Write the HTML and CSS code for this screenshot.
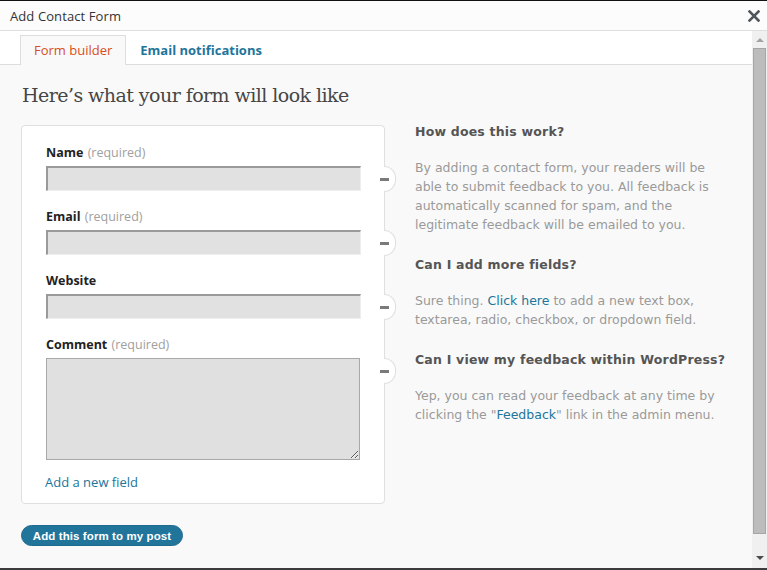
FILE: index.html
```html
<!DOCTYPE html>
<html>
<head>
<meta charset="utf-8">
<link rel="stylesheet" href="styles.css">
</head>
<body>
<div class="frame">
  <header class="titlebar">
    <span class="title">Add Contact Form</span>
    <svg class="close" width="12" height="12" viewBox="0 0 12 12"><path d="M1.5 1.5 L10.5 10.5 M10.5 1.5 L1.5 10.5" stroke="#50565c" stroke-width="2.6" stroke-linecap="square"/></svg>
  </header>
  <div class="main">
    <div class="pane">
      <nav class="tabs">
        <a class="tab active">Form builder</a>
        <a class="tab">Email notifications</a>
      </nav>
      <div class="content">
        <h1 class="heading">Here’s what your form will look like</h1>
        <div class="columns">
          <div class="left">
            <div class="card">
              <div class="field">
                <div class="label"><b>Name</b> <span class="req">(required)</span></div>
                <div class="control"><div class="input"></div><span class="knob"><i></i></span></div>
              </div>
              <div class="field">
                <div class="label"><b>Email</b> <span class="req">(required)</span></div>
                <div class="control"><div class="input"></div><span class="knob"><i></i></span></div>
              </div>
              <div class="field">
                <div class="label"><b>Website</b></div>
                <div class="control"><div class="input"></div><span class="knob"><i></i></span></div>
              </div>
              <div class="field last">
                <div class="label"><b>Comment</b> <span class="req">(required)</span></div>
                <div class="control"><textarea class="textarea"></textarea><span class="knob"><i></i></span></div>
              </div>
              <a class="addfield">Add a new field</a>
            </div>
            <button class="submit">Add this form to my post</button>
          </div>
          <div class="help">
            <h3>How does this work?</h3>
            <p>By adding a contact form, your readers will be able to submit feedback to you. All feedback is automatically scanned for spam, and the legitimate feedback will be emailed to you.</p>
            <h3>Can I add more fields?</h3>
            <p>Sure thing. <a>Click here</a> to add a new text box, textarea, radio, checkbox, or dropdown field.</p>
            <h3>Can I view my feedback within WordPress?</h3>
            <p>Yep, you can read your feedback at any time by clicking the "<a>Feedback</a>" link in the admin menu.</p>
          </div>
        </div>
      </div>
    </div>
    <div class="scrollbar">
      <span class="arrow up"></span>
      <span class="thumb"></span>
      <span class="arrow down"></span>
    </div>
  </div>
</div>
</body>
</html>
```
FILE: styles.css
```css
html, body {
  margin: 0;
  padding: 0;
  width: 767px;
  height: 570px;
  overflow: hidden;
  background: #f9f9f9;
}
.frame {
  height: 570px;
  box-sizing: border-box;
  border-top: 1px solid #111;
  border-bottom: 2px solid #3c3c3c;
  display: flex;
  flex-direction: column;
}
.titlebar {
  height: 29px;
  border-bottom: 1px solid #dedede;
  background: #fcfcfc;
  display: flex;
  align-items: center;
  justify-content: space-between;
  padding: 0 7px 0 10px;
  flex: none;
}
.title {
  font-family: "Open Sans", sans-serif;
  font-size: 13px;
  color: #333;
  letter-spacing: 0.1px;
}
.close { display: block; margin-top: 1px; }
.main {
  flex: 1;
  display: flex;
  min-height: 0;
}
.pane {
  flex: 1;
  display: flex;
  flex-direction: column;
  min-width: 0;
}
.tabs {
  height: 33px;
  background: #fff;
  border-bottom: 1px solid #dddddd;
  display: flex;
  align-items: flex-end;
  padding-left: 20px;
  flex: none;
}
.tab {
  font-family: "Open Sans", sans-serif;
  font-size: 13px;
  height: 29px;
  line-height: 29px;
  padding: 0 13px;
  margin-bottom: -1px;
  border: 1px solid transparent;
  border-bottom: 0;
  color: #21759b;
  font-weight: bold;
  letter-spacing: 0;
}
.tab.active {
  background: #f9f9f9;
  border-color: #dddddd;
  color: #d54e21;
  font-weight: normal;
  padding: 0 13px 0 13px;
  letter-spacing: 0;
}
.content {
  padding: 18px 0 0 21px;
}
.heading {
  margin: 0 0 18px 1px;
  font-family: "DejaVu Serif", serif;
  font-weight: normal;
  font-size: 19px;
  line-height: 24px;
  color: #464646;
  letter-spacing: -0.55px;
}
.columns {
  display: flex;
  align-items: flex-start;
}
.left {
  width: 364px;
  flex: none;
}
.card {
  background: #fff;
  border: 1px solid #dfdfdf;
  border-radius: 4px;
  padding: 18px 23px 12px 24px;
  display: flex;
  flex-direction: column;
}
.field { margin-bottom: 17px; }
.field.last { margin-bottom: 0; }
.label {
  font-family: "Open Sans", sans-serif;
  font-size: 12.5px;
  line-height: 18px;
  height: 18px;
  margin-bottom: 4px;
  color: #222;
}
.label b { font-weight: bold; }
.req { color: #a0a0a0; margin-left: 1px; }
.control { position: relative; }
.input {
  height: 25px;
  box-sizing: border-box;
  background: #e1e1e1;
  border-top: 2px solid #9a9a9a;
  border-left: 2px solid #9a9a9a;
  border-right: 1px solid #eee;
  border-bottom: 1px solid #eee;
}
.textarea {
  display: block;
  width: 314px;
  height: 102px;
  box-sizing: border-box;
  margin: 0;
  background: #e0e0e0;
  border: 1px solid #a8a8a8;
  resize: vertical;
  font: inherit;
}
.knob {
  position: absolute;
  left: calc(100% + 23px);
  top: 0;
  width: 11px;
  height: 24px;
  background: #fff;
  border: 1px solid #dfdfdf;
  border-left: 0;
  border-radius: 0 12px 12px 0;
}
.knob i {
  position: absolute;
  left: -4px;
  top: 11px;
  width: 9px;
  height: 3px;
  background: #7a7a7a;
}
.addfield {
  margin-top: 13px;
  font-family: "Open Sans", sans-serif;
  font-size: 13px;
  line-height: 18px;
  color: #21759b;
  margin-left: -1px;
}
.submit {
  margin-top: 21px;
  width: 162px;
  height: 21px;
  border: 1px solid #1e6a8d;
  border-radius: 11px;
  background: #21759b;
  color: #fff;
  font-family: "Liberation Sans", Arial, sans-serif;
  font-weight: bold;
  font-size: 11.5px;
  letter-spacing: 0.1px;
  padding: 0;
  display: block;
}
.help {
  margin-left: 30px;
  margin-top: -3px;
  width: 320px;
  font-family: "DejaVu Sans", Verdana, sans-serif;
  font-size: 12.5px;
  line-height: 19px;
  color: #9a9a9a;
}
.help h3 {
  margin: 0 0 17px;
  font-size: 12.5px;
  line-height: 19px;
  color: #555;
  font-weight: bold;
  letter-spacing: 0.2px;
  white-space: nowrap;
}
.help p { margin: 0 0 21px; }
.help a { color: #21759b; }
.scrollbar {
  width: 15px;
  flex: none;
  background: #f0f0f0;
  display: flex;
  flex-direction: column;
  align-items: center;
}
.arrow {
  width: 0;
  height: 0;
  border-left: 4px solid transparent;
  border-right: 4px solid transparent;
}
.arrow.up {
  margin-top: 7px;
  border-bottom: 4px solid #a3a3a3;
}
.arrow.down {
  margin-top: 22px;
  border-top: 4px solid #4a4a4a;
}
.thumb {
  margin-top: 6px;
  width: 13px;
  height: 486px;
  box-sizing: border-box;
  background: #bcbcbc;
  border: 1px solid #a6a6a6;
}
```
